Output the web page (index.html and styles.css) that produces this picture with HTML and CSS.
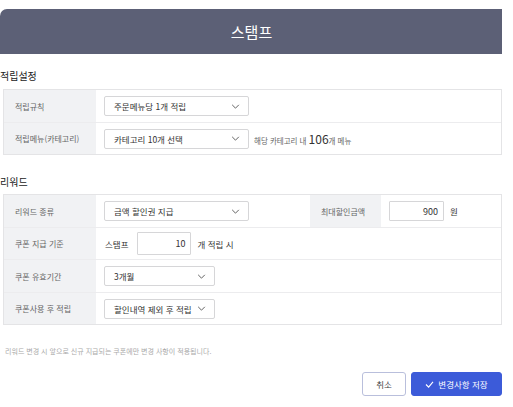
FILE: index.html
```html
<!DOCTYPE html>
<html lang="ko">
<head>
<meta charset="utf-8">
<link rel="stylesheet" href="styles.css">
</head>
<body>
<div class="page">
  <div class="header">스탬프</div>

  <div class="section-title first">적립설정</div>
  <div class="table">
    <div class="row">
      <div class="label">적립규칙</div>
      <div class="cell">
        <div class="select w145"><span>주문메뉴당 1개 적립</span><svg class="chev" viewBox="0 0 10 6"><path d="M1 1l4 4 4-4" fill="none" stroke="#555" stroke-width="1.1"/></svg></div>
      </div>
    </div>
    <div class="row">
      <div class="label">적립메뉴(카테고리)</div>
      <div class="cell">
        <div class="select w145"><span>카테고리 10개 선택</span><svg class="chev" viewBox="0 0 10 6"><path d="M1 1l4 4 4-4" fill="none" stroke="#555" stroke-width="1.1"/></svg></div>
        <span class="hint">해당 카테고리 내 <b>106</b>개 메뉴</span>
      </div>
    </div>
  </div>

  <div class="section-title second">리워드</div>
  <div class="table">
    <div class="row">
      <div class="label">리워드 종류</div>
      <div class="cell fixed">
        <div class="select w145"><span>금액 할인권 지급</span><svg class="chev" viewBox="0 0 10 6"><path d="M1 1l4 4 4-4" fill="none" stroke="#555" stroke-width="1.1"/></svg></div>
      </div>
      <div class="label sub">최대할인금액</div>
      <div class="cell">
        <div class="input w55">900</div>
        <span class="unit">원</span>
      </div>
    </div>
    <div class="row">
      <div class="label">쿠폰 지급 기준</div>
      <div class="cell">
        <span class="pre">스탬프</span>
        <div class="input w54 tall">10</div>
        <span class="unit">개 적립 시</span>
      </div>
    </div>
    <div class="row r33">
      <div class="label">쿠폰 유효기간</div>
      <div class="cell">
        <div class="select w111"><span>3개월</span><svg class="chev" viewBox="0 0 10 6"><path d="M1 1l4 4 4-4" fill="none" stroke="#555" stroke-width="1.1"/></svg></div>
      </div>
    </div>
    <div class="row">
      <div class="label">쿠폰사용 후 적립</div>
      <div class="cell">
        <div class="select w111"><span>할인내역 제외 후 적립</span><svg class="chev" viewBox="0 0 10 6"><path d="M1 1l4 4 4-4" fill="none" stroke="#555" stroke-width="1.1"/></svg></div>
      </div>
    </div>
  </div>

  <p class="note">리워드 변경 시 앞으로 신규 지급되는 쿠폰에만 변경 사항이 적용됩니다.</p>

  <div class="actions">
    <button class="btn cancel">취소</button>
    <button class="btn primary"><svg class="check" viewBox="0 0 10 8"><path d="M1 4l3 3 5-6" fill="none" stroke="#fff" stroke-width="1.3"/></svg>변경사항 저장</button>
  </div>
</div>
</body>
</html>
```

FILE: styles.css
```css
* { box-sizing: border-box; }
html, body { margin: 0; padding: 0; background: #fff; }
body {
  font-family: "Noto Sans CJK KR", "Noto Sans", sans-serif;
  color: #333;
  width: 513px;
  height: 407px;
  overflow: hidden;
}
.page { width: 502px; }
.header {
  margin-top: 9px;
  height: 45px;
  background: #5c6076;
  border-top-left-radius: 7px;
  color: #fff;
  font-size: 15px;
  display: flex;
  align-items: center;
  justify-content: center;
  padding-left: 1px;
}
.section-title {
  font-size: 10px;
  font-weight: 400;
  color: #222;
  line-height: 14px;
}
.section-title.first { margin-top: 15px; margin-bottom: 6px; }
.section-title.second { margin-top: 20px; margin-bottom: 5px; }
.table {
  margin-left: 3px;
  width: 499px;
  border: 1px solid #e4e4e6;
}
.row {
  display: flex;
  height: 32px;
  border-top: 1px solid #ececee;
}
.row:first-child { border-top: none; }
.row.r33 { height: 33px; }
.label {
  width: 92px;
  flex: none;
  background: #f1f2f4;
  font-size: 8px;
  color: #666;
  display: flex;
  align-items: center;
  padding-left: 11px;
}
.label.sub {
  width: 71px;
  padding-left: 11px;
}
.cell {
  display: flex;
  align-items: center;
  padding-left: 8px;
  font-size: 8.5px;
}
.cell.fixed { width: 214px; flex: none; }
.select {
  height: 20px;
  border: 1px solid #d6d6d8;
  border-radius: 2px;
  display: flex;
  align-items: center;
  justify-content: space-between;
  padding: 0 8px 0 9px;
  font-size: 8.5px;
  color: #333;
  background: #fff;
}
.w145 { width: 145px; }
.w111 { width: 111px; }
.chev { width: 9px; height: 5px; }
.hint { margin-left: 5px; font-size: 7.5px; color: #666; }
.hint b { font-size: 12px; font-weight: 400; color: #333; }
.input {
  height: 20px;
  border: 1px solid #d6d6d8;
  border-radius: 1px;
  display: flex;
  align-items: center;
  justify-content: flex-end;
  padding-right: 5px;
  font-size: 9px;
  color: #333;
}
.w55 { width: 55px; }
.w54 { width: 54px; }
.input.tall { height: 23px; }
.unit { margin-left: 6px; font-size: 8.5px; color: #333; }
.pre { font-size: 8.5px; color: #333; margin-right: 9px; margin-left: 1px; }
.note {
  margin: 21px 0 0 5px;
  font-size: 7px;
  color: #aaa;
}
.actions {
  display: flex;
  justify-content: flex-end;
  gap: 5px;
  margin-top: 16px;
}
.btn {
  height: 24px;
  border-radius: 3px;
  font-family: "Noto Sans CJK KR", "Noto Sans", sans-serif;
  font-size: 8.5px;
  display: flex;
  align-items: center;
  justify-content: center;
  padding: 0;
}
.cancel {
  width: 44px;
  background: #fff;
  border: 1px solid #b9bfdc;
  color: #444;
}
.primary {
  width: 91px;
  background: #3c5bd9;
  border: 1px solid #3c5bd9;
  color: #fff;
  gap: 4px;
}
.check { width: 9px; height: 7px; }
```
